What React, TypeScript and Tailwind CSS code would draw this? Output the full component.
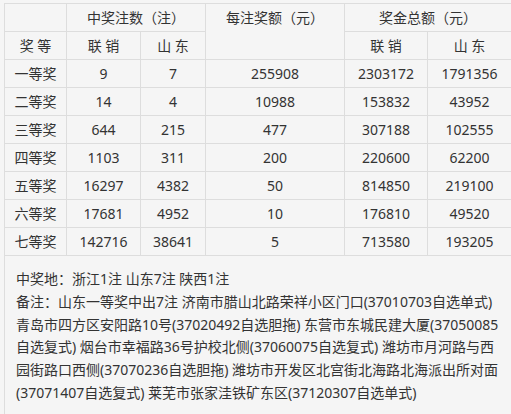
import React from "react";

const rows: [string, string, string, string, string, string][] = [
  ["一等奖", "9", "7", "255908", "2303172", "1791356"],
  ["二等奖", "14", "4", "10988", "153832", "43952"],
  ["三等奖", "644", "215", "477", "307188", "102555"],
  ["四等奖", "1103", "311", "200", "220600", "62200"],
  ["五等奖", "16297", "4382", "50", "814850", "219100"],
  ["六等奖", "17681", "4952", "10", "176810", "49520"],
  ["七等奖", "142716", "38641", "5", "713580", "193205"],
];

const lines = [
  "中奖地：浙江1注 山东7注 陕西1注",
  "备注：山东一等奖中出7注 济南市腊山北路荣祥小区门口(37010703自选单式)",
  "青岛市四方区安阳路10号(37020492自选胆拖) 东营市东城民建大厦(37050085",
  "自选复式) 烟台市幸福路36号护校北侧(37060075自选复式) 潍坊市月河路与西",
  "园街路口西侧(37070236自选胆拖) 潍坊市开发区北宫街北海路北海派出所对面",
  "(37071407自选复式) 莱芜市张家洼铁矿东区(37120307自选单式)",
];

const cell =
  "h-[28px] border-r border-b border-[#dddddd] flex items-center justify-center whitespace-nowrap";

export default function App() {
  return (
    <div
      className="w-[511px] h-[414px] overflow-hidden bg-[#f5f5f5] text-[#333333] text-[14px] pt-[3px] pl-[4px]"
      style={{ fontFamily: '"Noto Sans", "Noto Sans CJK SC", sans-serif' }}
    >
      <div className="w-[540px] border-l border-t border-[#dddddd]">
        <div className="grid grid-cols-[62px_74px_65px_139px_83px_84px] auto-rows-[28px]">
          <div className={cell}></div>
          <div className={`${cell} col-span-2`}>中奖注数（注）</div>
          <div className="row-span-2 border-r border-b border-[#dddddd] flex flex-col items-center">
            <div className="h-[27px] flex items-center">每注奖额（元）</div>
          </div>
          <div className={`${cell} col-span-2`}>奖金总额（元）</div>

          <div className={cell}>奖 等</div>
          <div className={cell}>联 销</div>
          <div className={cell}>山 东</div>
          <div className={cell}>联 销</div>
          <div className={cell}>山 东</div>

          {rows.map((r) =>
            r.map((v, i) => (
              <div key={r[0] + i} className={cell}>
                {v}
              </div>
            ))
          )}
        </div>
        <div className="pl-[11px] pt-[12px] pb-[10px] leading-[22.8px]">
          {lines.map((l) => (
            <div key={l} className="whitespace-nowrap">
              {l}
            </div>
          ))}
        </div>
      </div>
    </div>
  );
}
